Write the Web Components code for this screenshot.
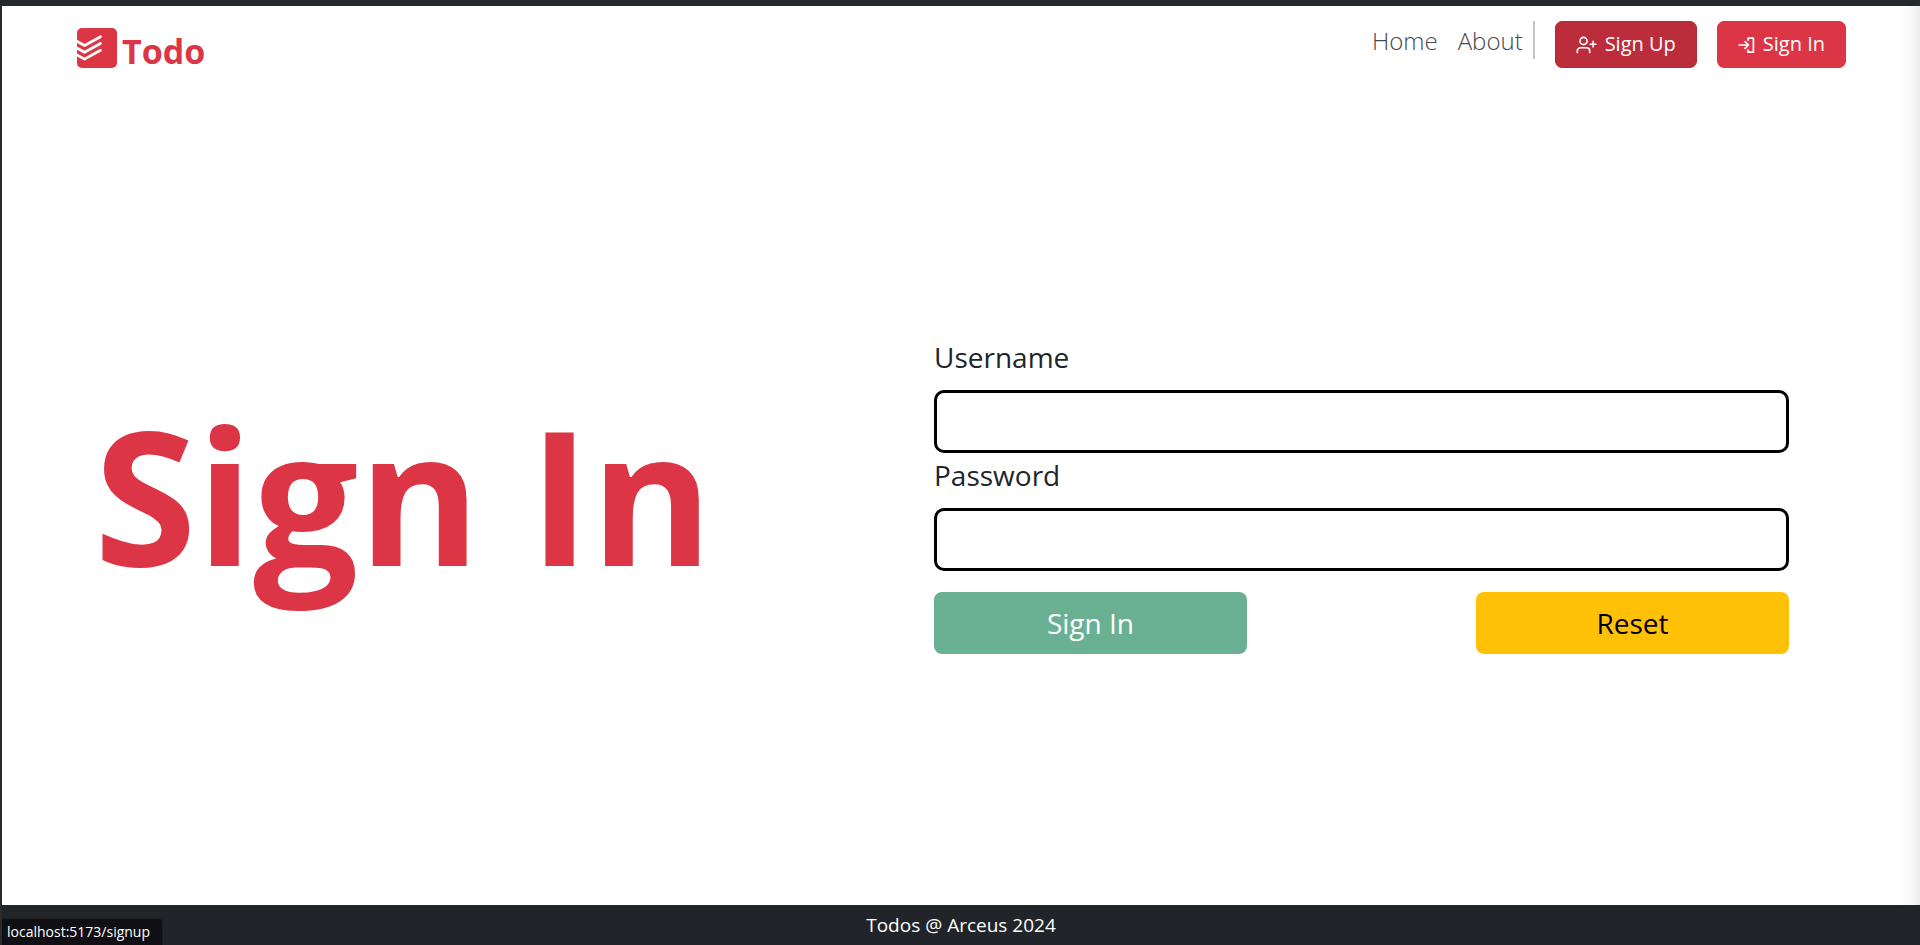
<!DOCTYPE html>
<html lang="en">
<head>
<meta charset="utf-8">
<meta name="viewport" content="width=device-width, initial-scale=1">
<title>Todo - Sign In</title>
<style>
  :root {
    --red: #dc3545;
    --dark: #212529;
  }
  html, body { height: 100%; }
  body {
    margin: 0;
    font-family: "Open Sans", "Noto Sans", sans-serif;
    color: var(--dark);
  }
</style>
</head>
<body>
<todo-app>
  <todo-navbar slot="header"></todo-navbar>
  <signin-page></signin-page>
  <todo-footer slot="footer">Todos @ Arceus 2024</todo-footer>
  <link-status slot="status">localhost:5173/signup</link-status>
</todo-app>

<script>
  class BaseElement extends HTMLElement {
    constructor() {
      super();
      this.attachShadow({ mode: "open" }).innerHTML =
        "<style>*{box-sizing:border-box}" + this.constructor.styles + "</style>" + this.render();
    }
  }

  customElements.define("todo-app", class extends BaseElement {
    static styles = `
      :host {
        box-sizing: border-box; position: relative; display: flex; flex-direction: column; min-height: 100vh;
        border-top: 6px solid #22282c; border-left: 2px solid #2b2b2b; background: #fff;
      }
      .content {
        flex: 1; display: flex; flex-direction: column;
        background: linear-gradient(to left, #ebebeb, #f8f8f8 8px, #fefefe 18px, #fff 24px);
      }
      main { flex: 1; display: grid; }
    `;
    render() {
      return `<div class="content"><slot name="header"></slot><main><slot></slot></main></div>
        <slot name="footer"></slot><slot name="status"></slot>`;
    }
  });

  customElements.define("todo-logo", class extends BaseElement {
    static styles = `
      :host { display: block; }
      a { display: flex; align-items: center; gap: 5px; color: var(--red); text-decoration: none;
        font-size: 34px; line-height: 48px; font-weight: 700; }
      svg { display: block; width: 40px; height: 40px; }
      span { padding-top: 6px; }
    `;
    render() {
      return `<a href="#home">
        <svg viewBox="0 0 40 40" aria-hidden="true">
          <rect width="40" height="40" rx="5" fill="#dc3545"/>
          <g fill="none" stroke="#fff" stroke-width="2.7" stroke-linecap="round" stroke-linejoin="round">
            <path d="M-1 12.8 7.5 17.5 23.5 8.7"/>
            <path d="M-1 19.6 7.5 24.3 23.5 15.5"/>
            <path d="M-1 26.4 7.5 31.1 23.5 22.3"/>
          </g>
        </svg><span>Todo</span></a>`;
    }
  });

  customElements.define("nav-link", class extends BaseElement {
    static styles = `
      :host { display: block; }
      a { color: #44494d; text-decoration: none; font-size: 24px; line-height: 40px; font-weight: 300; }
    `;
    render() {
      return `<a href="#${this.getAttribute("to")}"><slot></slot></a>`;
    }
  });

  customElements.define("nav-button", class extends BaseElement {
    static styles = `
      :host { display: block; }
      button {
        display: flex; align-items: center; gap: 8px; height: 47px; padding: 0 20px;
        border: 1px solid var(--edge, var(--red)); border-radius: 7px; background: var(--fill, var(--red));
        color: #fff; font: 400 20px/28px "Open Sans", sans-serif; cursor: pointer;
      }
      span { padding-bottom: 2px; }
      ::slotted(svg) { display: block; height: 20px; }
    `;
    render() {
      return `<button type="button"><slot name="icon"></slot><span><slot></slot></span></button>`;
    }
  });

  customElements.define("todo-navbar", class extends BaseElement {
    static styles = `
      :host { display: block; }
      nav { display: flex; justify-content: space-between; align-items: flex-start; padding: 15px 74px 8px 75px; }
      .links { display: flex; align-items: flex-start; gap: 20px; }
      .pages { display: flex; gap: 20px; height: 38px; padding-right: 10px; border-right: 2px solid #c4c4c4; }
      .active { --fill: #bb2d3b; --edge: #b02a37; }
    `;
    render() {
      return `<nav>
        <todo-logo></todo-logo>
        <div class="links">
          <div class="pages">
            <nav-link to="home">Home</nav-link>
            <nav-link to="about">About</nav-link>
          </div>
          <nav-button class="active">
            <svg slot="icon" width="21" height="20" viewBox="0 0 21 20" fill="none" stroke="#fff" stroke-width="1.6" stroke-linecap="round" aria-hidden="true">
              <circle cx="7.5" cy="6" r="3.6"/>
              <path d="M1.3 17.6V16a3.2 3.2 0 0 1 3.2-3.2h6a3.2 3.2 0 0 1 3.2 3.2v1.6M14.3 9.2h5.6M17.1 6.4V12"/>
            </svg>Sign Up
          </nav-button>
          <nav-button>
            <svg slot="icon" width="17" height="20" viewBox="0 0 17 20" fill="none" stroke="#fff" stroke-width="1.7" stroke-linecap="round" stroke-linejoin="round" aria-hidden="true">
              <path d="M10 3.2h5.4v14H10v-2M10 3.2v2M1.2 10h9.2M7 6.6l3.5 3.4L7 13.4"/>
            </svg>Sign In
          </nav-button>
        </div>
      </nav>`;
    }
  });

  customElements.define("form-field", class extends BaseElement {
    static styles = `
      :host { display: block; }
      label { display: block; margin-bottom: 10px; font-size: 28px; line-height: 45px; }
      input {
        display: block; width: 100%; height: 63px; padding: 8px 16px; border: 3px solid #000;
        border-radius: 10px; background: #fff; font: 400 28px/40px "Open Sans", sans-serif; outline: none;
      }
    `;
    render() {
      return `<label for="field">${this.getAttribute("label")}</label>
        <input id="field" type="${this.getAttribute("type")}">`;
    }
  });

  customElements.define("form-button", class extends BaseElement {
    static styles = `
      :host { display: block; }
      button {
        display: block; width: 100%; height: 62px; padding: 0; border: 0; border-radius: 8px;
        background: var(--fill); color: var(--ink); font: 400 28px/40px "Open Sans", sans-serif; cursor: pointer;
      }
    `;
    render() {
      return `<button type="${this.getAttribute("type")}"><slot></slot></button>`;
    }
  });

  customElements.define("signin-page", class extends BaseElement {
    static styles = `
      :host { display: grid; grid-template-columns: 840fr 855fr; align-items: center; padding: 0 131px 0 92px; }
      h1 { margin: 0; color: var(--red); font-size: 186px; line-height: 220px; font-weight: 700; white-space: nowrap; }
      form { margin: 0; }
      .actions { display: flex; justify-content: space-between; margin-top: 21px; }
      form-button { flex: 0 0 36.6%; }
      .submit { --fill: #6ab092; --ink: #fff; }
      .reset { --fill: #ffc107; --ink: #000; }
    `;
    render() {
      return `<h1>Sign In</h1>
        <form>
          <form-field label="Username" type="text"></form-field>
          <form-field label="Password" type="password"></form-field>
          <div class="actions">
            <form-button class="submit" type="submit">Sign In</form-button>
            <form-button class="reset" type="reset">Reset</form-button>
          </div>
        </form>`;
    }
  });

  customElements.define("todo-footer", class extends BaseElement {
    static styles = `
      :host { display: block; background: var(--dark); color: #fff; text-align: center; font-size: 19px; line-height: 40px; }
    `;
    render() { return `<footer><slot></slot></footer>`; }
  });

  customElements.define("link-status", class extends BaseElement {
    static styles = `
      :host {
        position: absolute; left: 0; bottom: 0; box-sizing: border-box; padding: 0 12px 0 5px;
        border-top: 1px solid #1c1e22; border-right: 1px solid #1c1e22; border-radius: 0 5px 0 0;
        background: #0f0f14; color: #fff; font-size: 14px; line-height: 26px;
      }
    `;
    render() { return `<slot></slot>`; }
  });
</script>
</body>
</html>
